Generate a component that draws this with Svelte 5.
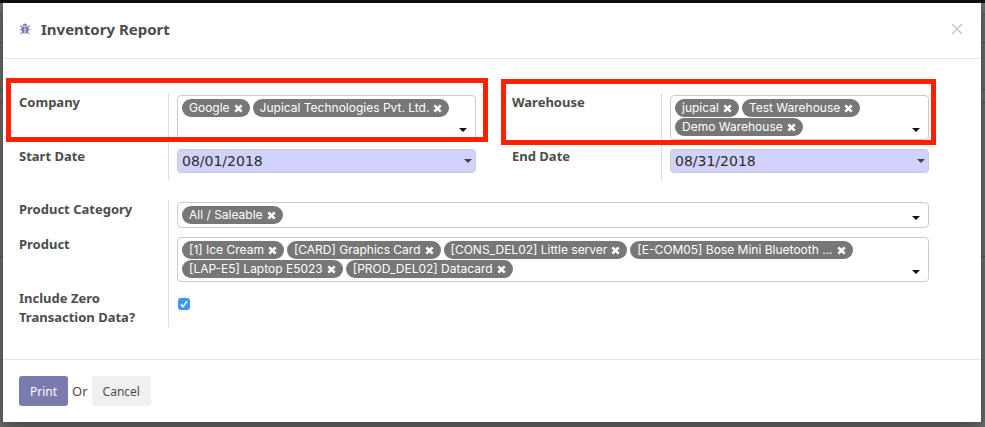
<script>
  let companies = $state(['Google', 'Jupical Technologies Pvt. Ltd.']);
  let warehouses = $state(['jupical', 'Test Warehouse', 'Demo Warehouse']);
  let categories = $state(['All / Saleable']);
  let products = $state([
    '[1] Ice Cream',
    '[CARD] Graphics Card',
    '[CONS_DEL02] Little server',
    '[E-COM05] Bose Mini Bluetooth ...',
    '[LAP-E5] Laptop E5023',
    '[PROD_DEL02] Datacard'
  ]);
  let startDate = $state('08/01/2018');
  let endDate = $state('08/31/2018');
  let includeZero = $state(true);
</script>

{#snippet caret()}
  <svg class="caret" viewBox="0 0 8 4" aria-hidden="true"><path d="M0 0h8L4 4z" /></svg>
{/snippet}

{#snippet tags(id, items)}
  <div class="field tags">
    {#each items as item, i}
      <span class="tag">
        {item}
        <button type="button" aria-label="Remove {item}" onclick={() => items.splice(i, 1)}>
          <svg viewBox="0 0 9 9" aria-hidden="true"><path d="M1.3 1.3l6.4 6.4M7.7 1.3l-6.4 6.4" /></svg>
        </button>
      </span>
    {/each}
    <input {id} type="text" autocomplete="off" />
    {@render caret()}
  </div>
{/snippet}

<div class="page">
  <div class="navbar"></div>
  <div class="backdrop">
    <div class="rule first"></div>
    <div class="rule second"></div>
    <div class="rule third"></div>
    <div class="rule fourth"></div>
    <div class="rule fifth"></div>
  </div>

  <form class="modal" aria-labelledby="title" onsubmit={(e) => e.preventDefault()}>
    <header>
      <svg class="bug" viewBox="0 0 1664 1728" aria-hidden="true">
        <path d="M1632 960q0 26-19 45t-45 19h-224q0 171-67 290l208 209q19 19 19 45t-19 45q-18 19-45 19t-45-19l-198-197q-5 5-15 13t-42 28.500-65 36.500-82 29-97 13v-896h-128v896q-51 0-101.500-13.500t-87-33-66-39-43.500-32.500l-15-14-183 207q-20 21-48 21-24 0-43-16-19-18-20.500-44.500t15.500-46.500l202-227q-58-114-58-274h-224q-26 0-45-19t-19-45 19-45 45-19h224v-294l-173-173q-19-19-19-45t19-45 45-19 45 19l173 173h844l173-173q19-19 45-19t45 19 19 45-19 45l-173 173v294h224q26 0 45 19t19 45zm-480-576h-640q0-133 93.500-226.500t226.500-93.500 226.500 93.500 93.500 226.500z" />
      </svg>
      <h1 id="title">Inventory Report</h1>
      <button type="button" class="close" aria-label="Close">
        <svg viewBox="0 0 12 12" aria-hidden="true"><path d="M1 1l10 10M11 1L1 11" /></svg>
      </button>
    </header>

    <div class="body">
      <div class="columns">
        <div class="group">
          <div class="row tall marked">
            <label for="company">Company</label>
            <div class="cell">{@render tags('company', companies)}</div>
          </div>
          <div class="row">
            <label for="start">Start Date</label>
            <div class="cell">
              <div class="field date">
                <input id="start" type="text" bind:value={startDate} />
                {@render caret()}
              </div>
            </div>
          </div>
        </div>
        <div class="group">
          <div class="row tall marked right">
            <label for="warehouse">Warehouse</label>
            <div class="cell">{@render tags('warehouse', warehouses)}</div>
          </div>
          <div class="row">
            <label for="end">End Date</label>
            <div class="cell">
              <div class="field date">
                <input id="end" type="text" bind:value={endDate} />
                {@render caret()}
              </div>
            </div>
          </div>
        </div>
      </div>

      <div class="group">
        <div class="row">
          <label for="category">Product Category</label>
          <div class="cell">{@render tags('category', categories)}</div>
        </div>
        <div class="row">
          <label for="product">Product</label>
          <div class="cell">{@render tags('product', products)}</div>
        </div>
        <div class="row">
          <label for="zero">Include Zero Transaction Data?</label>
          <div class="cell check">
            <input id="zero" type="checkbox" bind:checked={includeZero} />
          </div>
        </div>
      </div>
    </div>

    <footer>
      <button type="submit" class="btn primary">Print</button>
      <span>Or</span>
      <button type="button" class="btn">Cancel</button>
    </footer>
  </form>
</div>

<style>
  :global(body) {
    background: #6c6c6c;
  }
  .page,
  .page * {
    box-sizing: border-box;
  }
  .page {
    position: relative;
    min-height: 100vh;
    overflow: hidden;
    padding: 0 4px 5px 3px;
    color: #4c4c4c;
    font-family: 'Noto Sans', 'Open Sans', sans-serif;
    font-size: 13px;
    line-height: 19px;
  }
  .navbar {
    height: 3px;
    margin: 0 -4px 0 -3px;
    background: #111;
  }
  .backdrop {
    position: absolute;
    inset: 3px 0 0;
    background: #6c6c6c;
  }
  .rule {
    border-bottom: 1px solid #505050;
  }
  .first {
    height: 12px;
  }
  .second {
    height: 28px;
  }
  .third {
    height: 47px;
  }
  .fourth {
    height: 13px;
  }
  .fifth {
    height: 154px;
  }
  .modal {
    position: relative;
    margin: 0;
    background: #fff;
    box-shadow: 0 5px 15px rgba(0, 0, 0, 0.4);
  }
  header {
    display: flex;
    align-items: center;
    height: 56px;
    padding: 0 16px 4px;
    border-bottom: 1px solid #e5e5e5;
  }
  .bug {
    width: 12px;
    height: 12px;
    margin-right: 10px;
    fill: #7c7bad;
  }
  h1 {
    margin: 0;
    font-size: 15px;
    font-weight: 700;
    line-height: 24px;
  }
  button {
    font: inherit;
    cursor: pointer;
  }
  .close {
    display: flex;
    margin: 0 0 0 auto;
    padding: 2px;
    border: 0;
    background: none;
  }
  .close svg {
    width: 12px;
    height: 12px;
    fill: none;
    stroke: #c8c8c8;
    stroke-width: 1.5;
  }
  .body {
    padding: 34px 52px 32px 16px;
  }
  .columns {
    display: grid;
    grid-template-columns: 457fr 417fr;
    column-gap: 36px;
    margin-bottom: 20px;
  }
  .row {
    position: relative;
    display: grid;
    grid-template-columns: 149px 1fr;
  }
  .tall {
    height: 54px;
  }
  .marked::after {
    content: '';
    position: absolute;
    inset: -15px -12px 5px -13px;
    border: 5px solid #ff2000;
    pointer-events: none;
  }
  .right::after {
    inset: -14px -7px 2px -11px;
  }
  label {
    padding-right: 20px;
    font-weight: 700;
  }
  .cell {
    min-width: 0;
    padding: 2px 0 7px 8px;
    border-left: 1px solid #ddd;
  }
  .field {
    position: relative;
    border: 1px solid #ccc;
    border-radius: 4px;
  }
  .tags {
    display: flex;
    flex-wrap: wrap;
    align-content: flex-start;
    gap: 1px 3px;
    padding: 3px 4px;
    font-family: Inter, 'Noto Sans', sans-serif;
    font-size: 12px;
  }
  .tall .tags {
    height: 100%;
  }
  .tag {
    display: flex;
    align-items: center;
    gap: 4px;
    height: 18px;
    padding: 0 7px;
    border-radius: 9px;
    background: #777;
    color: #fff;
    line-height: 18px;
    white-space: nowrap;
  }
  .tag button {
    display: flex;
    padding: 0;
    border: 0;
    background: none;
  }
  .tag svg {
    width: 9px;
    height: 9px;
    stroke: #fff;
    stroke-width: 2.6;
  }
  .field input {
    min-width: 0;
    padding: 0;
    border: 0;
    outline: 0;
    background: none;
    color: inherit;
    font: inherit;
  }
  .tags input {
    flex: 1 0 50px;
    width: 50px;
    height: 17px;
  }
  .caret {
    position: absolute;
    right: 8px;
    bottom: 7px;
    width: 8px;
    height: 4px;
    fill: #111;
  }
  .date {
    height: 24px;
    background: #d2d2ff;
    color: #2c2c2c;
    font-family: 'DejaVu Sans', sans-serif;
    font-size: 14px;
  }
  .date input {
    width: 100%;
    height: 22px;
    padding: 0 16px 0 4px;
  }
  .date .caret {
    right: 3px;
    bottom: 9px;
    fill: #444;
  }
  .check {
    padding: 9px 0 0 9px;
  }
  .check input {
    display: block;
    appearance: none;
    width: 12px;
    height: 12px;
    margin: 0;
    border: 1px solid #bbb;
    border-radius: 3px;
  }
  .check input:checked {
    border: 0;
    background: #3b99fc
      url("data:image/svg+xml,%3Csvg xmlns='http://www.w3.org/2000/svg' viewBox='0 0 12 12'%3E%3Cpath d='M3 6.300l2 2.400L9 3.200' fill='none' stroke='white' stroke-width='1.600'/%3E%3C/svg%3E");
  }
  footer {
    display: flex;
    align-items: center;
    gap: 4px;
    padding: 16px;
    border-top: 1px solid #e5e5e5;
  }
  .btn {
    height: 30px;
    padding: 0 11px;
    border: 0;
    border-radius: 3px;
    background: #f0f0f0;
    color: #4c4c4c;
    font-size: 12px;
  }
  .primary {
    background: #7c7bad;
    color: #fff;
  }
</style>
